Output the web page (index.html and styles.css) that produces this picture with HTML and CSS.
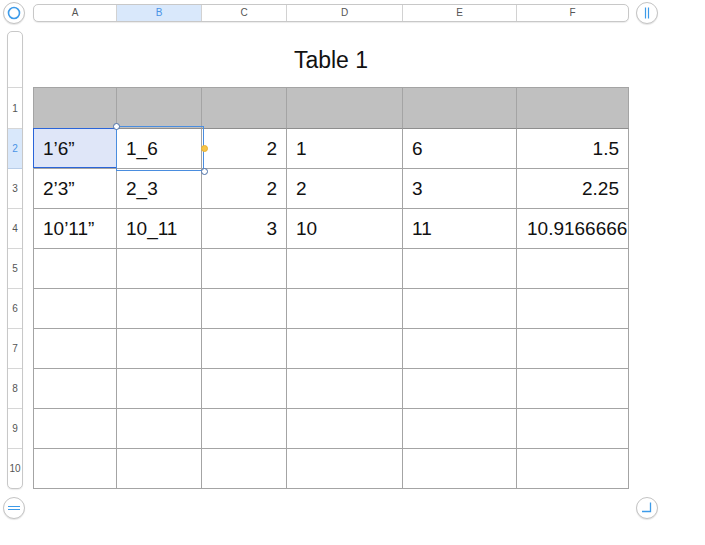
FILE: index.html
```html
<!DOCTYPE html>
<html>
<head>
<meta charset="utf-8">
<link rel="stylesheet" href="styles.css">
</head>
<body>
<div class="app">
  <div class="cell-tl">
    <div class="round">
      <svg width="22" height="22" viewBox="0 0 22 22"><circle cx="11" cy="11" r="5.5" fill="none" stroke="#3d9be9" stroke-width="1.6"/></svg>
    </div>
  </div>
  <div class="colbar">
    <div class="ch">A</div>
    <div class="ch sel">B</div>
    <div class="ch">C</div>
    <div class="ch">D</div>
    <div class="ch">E</div>
    <div class="ch last">F</div>
  </div>
  <div class="cell-tr">
    <div class="round">
      <svg width="22" height="22" viewBox="0 0 22 22"><path d="M9.5 5.5V16.5M12.5 5.5V16.5" stroke="#3d9be9" stroke-width="1.2" fill="none"/></svg>
    </div>
  </div>

  <div class="cell-rowbar">
    <div class="rowbar">
      <div class="rh top"></div>
      <div class="rh r1">1</div>
      <div class="rh sel">2</div>
      <div class="rh">3</div>
      <div class="rh">4</div>
      <div class="rh">5</div>
      <div class="rh">6</div>
      <div class="rh">7</div>
      <div class="rh">8</div>
      <div class="rh">9</div>
      <div class="rh last">10</div>
    </div>
  </div>
  <div class="sheet">
    <div class="title">Table 1</div>
    <div class="grid">
      <div class="c hd"></div><div class="c hd"></div><div class="c hd"></div><div class="c hd"></div><div class="c hd"></div><div class="c hd"></div>

      <div class="c asel">1’6”</div><div class="c">1_6</div><div class="c num">2</div><div class="c">1</div><div class="c">6</div><div class="c num">1.5</div>
      <div class="c">2’3”</div><div class="c">2_3</div><div class="c num">2</div><div class="c">2</div><div class="c">3</div><div class="c num">2.25</div>
      <div class="c">10’11”</div><div class="c">10_11</div><div class="c num">3</div><div class="c">10</div><div class="c">11</div><div class="c clip">10.9166666</div>

      <div class="c"></div><div class="c"></div><div class="c"></div><div class="c"></div><div class="c"></div><div class="c"></div>
      <div class="c"></div><div class="c"></div><div class="c"></div><div class="c"></div><div class="c"></div><div class="c"></div>
      <div class="c"></div><div class="c"></div><div class="c"></div><div class="c"></div><div class="c"></div><div class="c"></div>
      <div class="c"></div><div class="c"></div><div class="c"></div><div class="c"></div><div class="c"></div><div class="c"></div>
      <div class="c"></div><div class="c"></div><div class="c"></div><div class="c"></div><div class="c"></div><div class="c"></div>
      <div class="c"></div><div class="c"></div><div class="c"></div><div class="c"></div><div class="c"></div><div class="c"></div>

      <div class="abox"></div>
      <div class="bsel"></div>
      <div class="handle h-tl"></div>
      <div class="handle h-br"></div>
      <div class="handle h-y"></div>
    </div>
  </div>
  <div class="cell-empty"></div>

  <div class="cell-bl">
    <div class="round">
      <svg width="22" height="22" viewBox="0 0 22 22"><path d="M5 9.5H17M5 12.5H17" stroke="#3d9be9" stroke-width="1.2" fill="none"/></svg>
    </div>
  </div>
  <div class="cell-empty"></div>
  <div class="cell-br">
    <div class="round">
      <svg width="22" height="22" viewBox="0 0 22 22"><path d="M14.5 5.5V14.5H6" stroke="#3d9be9" stroke-width="1.3" fill="none"/></svg>
    </div>
  </div>
</div>
</body>
</html>
```

FILE: styles.css
```css
html, body {
  margin: 0;
  padding: 0;
  background: #ffffff;
}
body {
  width: 705px;
  height: 545px;
  overflow: hidden;
  font-family: "Liberation Sans", Arial, sans-serif;
}
.app {
  display: grid;
  grid-template-columns: 33px 596px 76px;
  grid-template-rows: 31px 458px 56px;
}
.round {
  width: 22px;
  height: 22px;
  box-sizing: border-box;
  border: 1px solid #c4c4c4;
  border-radius: 50%;
  background: #fff;
  box-shadow: 0 1px 1px rgba(0,0,0,0.10);
  position: relative;
}
.round svg {
  position: absolute;
  left: -1px;
  top: -1px;
}
.cell-tl {
  padding: 2px 0 0 3px;
}
.cell-tr {
  padding: 2px 0 0 7px;
}
.cell-bl {
  padding: 8px 0 0 3px;
}
.cell-br {
  padding: 8px 0 0 7px;
}
.colbar {
  margin-top: 4px;
  height: 18px;
  width: 596px;
  box-sizing: border-box;
  border: 1px solid #c8c8c8;
  border-radius: 5px;
  display: flex;
  overflow: hidden;
  box-shadow: 0 1px 1px rgba(0,0,0,0.08);
  background: #fff;
}
.ch {
  box-sizing: border-box;
  border-right: 1px solid #d2d2d2;
  font-size: 10px;
  color: #555;
  text-align: center;
  line-height: 16px;
}
.ch:nth-child(1) { width: 83px; }
.ch:nth-child(2) { width: 85px; }
.ch:nth-child(3) { width: 85px; }
.ch:nth-child(4) { width: 116px; }
.ch:nth-child(5) { width: 114px; }
.ch:nth-child(6) { width: 111px; border-right: none; }
.ch.sel {
  background: #d9e8fb;
  color: #4a94e6;
}
.cell-rowbar {
  padding-left: 7px;
}
.rowbar {
  width: 16px;
  box-sizing: border-box;
  border: 1px solid #c8c8c8;
  border-radius: 5px;
  overflow: hidden;
  display: flex;
  flex-direction: column;
  background: #fff;
  box-shadow: 0 1px 1px rgba(0,0,0,0.08);
}
.rh {
  height: 40px;
  box-sizing: border-box;
  border-bottom: 1px solid #d6d6d6;
  font-size: 10px;
  color: #555;
  display: flex;
  align-items: center;
  justify-content: center;
}
.rh.top { height: 56px; }
.rh.r1 { height: 41px; }
.rh.last { border-bottom: none; height: 39px; }
.rh.sel {
  background: #d9e8fb;
  color: #4a94e6;
  border-bottom-color: #b8cde8;
}
.sheet {
  display: flex;
  flex-direction: column;
}
.title {
  height: 56px;
  box-sizing: border-box;
  padding-top: 16px;
  text-align: center;
  font-size: 23px;
  color: #111;
  line-height: 26px;
}
.grid {
  position: relative;
  display: grid;
  grid-template-columns: 83px 85px 85px 116px 114px 112px;
  grid-template-rows: 41px repeat(9, 40px);
  width: 596px;
  box-sizing: border-box;
  border-left: 1px solid #a4a4a4;
  border-top: 1px solid #a4a4a4;
}
.c {
  box-sizing: border-box;
  border-right: 1px solid #a4a4a4;
  border-bottom: 1px solid #a4a4a4;
  font-size: 19px;
  color: #111;
  display: flex;
  align-items: center;
  padding: 0 9px 0 9px;
  white-space: nowrap;
  overflow: hidden;
}
.c.hd {
  background: #c0c0c0;
  border-bottom-color: #8e8e8e;
}
.c.num {
  justify-content: flex-end;
}
.c.clip {
  padding-left: 10px;
  padding-right: 0;
}
.c.asel {
  background: #dfe6f8;
}
.abox {
  position: absolute;
  left: -1px;
  top: 40px;
  width: 84px;
  height: 40px;
  box-sizing: border-box;
  border: 1.5px solid #2a64d8;
  pointer-events: none;
}
.bsel {
  position: absolute;
  left: 82px;
  top: 38px;
  width: 88px;
  height: 45px;
  box-sizing: border-box;
  border: 1px solid #4a8ddf;
}
.handle {
  position: absolute;
  width: 7px;
  height: 7px;
  box-sizing: border-box;
  border-radius: 50%;
  background: #fff;
  border: 1px solid #4a6fa8;
}
.h-tl { left: 79px; top: 35px; }
.h-br { left: 167px; top: 80px; }
.h-y {
  left: 167px;
  top: 57px;
  background: #f6c447;
  border-color: #e8b030;
}
```
